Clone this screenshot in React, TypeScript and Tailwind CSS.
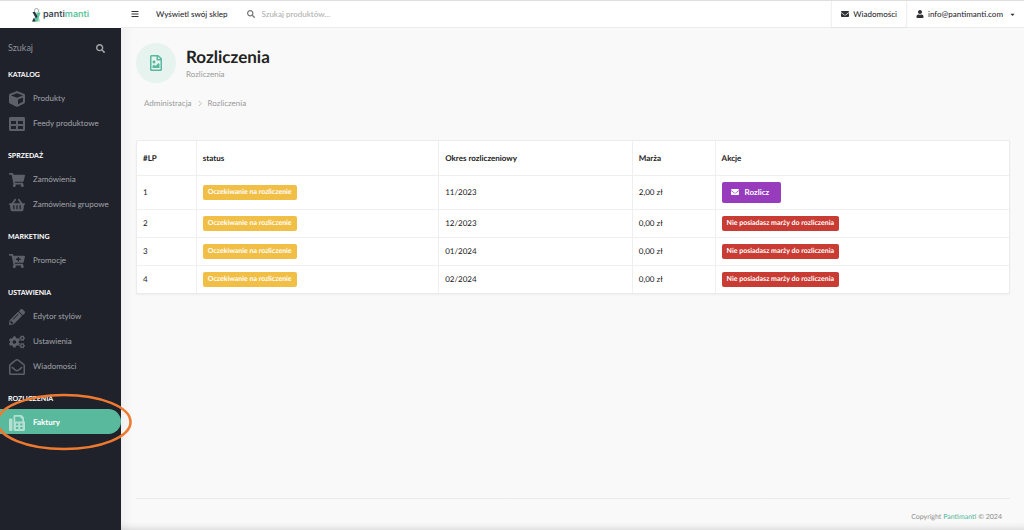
import type { ReactNode } from 'react'
import type { IconType } from 'react-icons'
import {
  FaBars,
  FaCaretDown,
  FaCartPlus,
  FaCogs,
  FaCube,
  FaEnvelope,
  FaPencilAlt,
  FaRegEnvelopeOpen,
  FaRegFileImage,
  FaSearch,
  FaShoppingBasket,
  FaShoppingCart,
  FaTable,
  FaUser,
} from 'react-icons/fa'

type Icon = IconType | ((props: { className?: string }) => ReactNode)
type MenuItem = { label: string; icon: Icon; active?: boolean }
type MenuSection = { title: string; items: MenuItem[] }

// Faks: słuchawka po lewej, kartka ze ściętym rogiem i klawiatura
function FaxIcon({ className }: { className?: string }) {
  return (
    <svg viewBox="0 0 512 512" fill="currentColor" className={className} aria-hidden="true">
      <rect x="0" y="110" width="112" height="402" rx="40" />
      <path
        fillRule="evenodd"
        d="M144 40a40 40 0 0 1 40-40h216l80 80v110a48 48 0 0 1 32 46v228a48 48 0 0 1-48 48H192a48 48 0 0 1-48-48zM200 56v152h224V112h-40a16 16 0 0 1-16-16V56zM224 272v64h72v-64zM360 272v64h72v-64zM224 384v64h72v-64zM360 384v64h72v-64z"
      />
    </svg>
  )
}

const MENU: MenuSection[] = [
  {
    title: 'KATALOG',
    items: [
      { label: 'Produkty', icon: FaCube },
      { label: 'Feedy produktowe', icon: FaTable },
    ],
  },
  {
    title: 'SPRZEDAŻ',
    items: [
      { label: 'Zamówienia', icon: FaShoppingCart },
      { label: 'Zamówienia grupowe', icon: FaShoppingBasket },
    ],
  },
  { title: 'MARKETING', items: [{ label: 'Promocje', icon: FaCartPlus }] },
  {
    title: 'USTAWIENIA',
    items: [
      { label: 'Edytor stylów', icon: FaPencilAlt },
      { label: 'Ustawienia', icon: FaCogs },
      { label: 'Wiadomości', icon: FaRegEnvelopeOpen },
    ],
  },
  { title: 'ROZLICZENIA', items: [{ label: 'Faktury', icon: FaxIcon, active: true }] },
]

const ROWS = [
  { id: 1, period: '11/2023', margin: '2,00 zł', payable: true },
  { id: 2, period: '12/2023', margin: '0,00 zł', payable: false },
  { id: 3, period: '01/2024', margin: '0,00 zł', payable: false },
  { id: 4, period: '02/2024', margin: '0,00 zł', payable: false },
]

function Logo() {
  return (
    <a href="#" className="flex h-[27px] items-center justify-center gap-0.5 bg-white">
      <svg viewBox="0 0 18 28" className="h-3.5 w-[9px]" aria-hidden="true">
        <path d="M5 8V5a4 4 0 0 1 8 0v3" fill="none" stroke="#8b8f94" strokeWidth="1.6" />
        <path d="M2 9h15l-4 9 4 9H1l5-9z" fill="#a5dfc6" />
        <path d="M11 9h6l-6 18H3z" fill="#5fc4a0" />
        <path d="M1 8h5l5 9-3 4z" fill="#2b3440" />
        <path d="M0 27l4-8 3 8z" fill="#2b3440" />
      </svg>
      <span className="font-[Inter,sans-serif] text-[9px] leading-3 font-semibold text-[#3f4a56]">
        panti<span className="text-[#5fc4a0]">manti</span>
      </span>
    </a>
  )
}

function SidebarLink({ item }: { item: MenuItem }) {
  const Icon = item.icon
  return (
    <a
      href="#"
      className={
        item.active
          ? 'flex h-[25px] items-center rounded-r-full bg-[#59b99d] pl-[9px] text-white'
          : 'flex h-[25px] items-center pl-[9px] text-[#a0a2a7]'
      }
    >
      <span className={item.active ? 'w-6 pt-0.5 text-[#b4e0d3]' : 'w-6 pt-0.5 text-[#5d6068]'}>
        <Icon className="h-4 w-auto" />
      </span>
      <span className={item.active ? 'text-[8px] leading-3 font-bold' : 'text-[8px] leading-3'}>{item.label}</span>
    </a>
  )
}

function Sidebar() {
  return (
    <aside className="relative w-[121px] shrink-0 bg-[#1f222b]">
      <Logo />
      <div className="flex items-center px-2 pt-3 pb-2">
        <input
          type="text"
          aria-label="Szukaj"
          placeholder="Szukaj"
          className="w-0 grow bg-transparent text-[9px] leading-4 outline-none placeholder:text-[#8f9197]"
        />
        <button type="button" aria-label="Szukaj w menu" className="mr-2 text-[#a5a7ab]">
          <FaSearch className="size-[9px]" />
        </button>
      </div>
      <nav>
        {MENU.map((section) => (
          <section key={section.title} className="pb-[10px]">
            <h2 className="flex h-[21px] items-center pl-2 text-[7px] leading-3 font-bold text-white">
              {section.title}
            </h2>
            {section.items.map((item) => (
              <SidebarLink key={item.label} item={item} />
            ))}
          </section>
        ))}
      </nav>

      {/* odręczne zaznaczenie pozycji Faktury */}
      <svg
        viewBox="0 0 136 60"
        className="pointer-events-none absolute top-[391px] left-0 z-10 h-[60px] w-[136px]"
        aria-hidden="true"
      >
        <ellipse cx="64" cy="30" rx="66.5" ry="27" fill="none" stroke="#ee7a30" strokeWidth="2.6" />
      </svg>
    </aside>
  )
}

function TopBar() {
  return (
    <header className="flex h-[27px] items-center border-b border-[#ececec] bg-white text-[8px] font-medium text-[#2f3033]">
      <button type="button" aria-label="Menu" className="ml-[10px]">
        <FaBars className="size-2" />
      </button>
      <a href="#" className="ml-[17px]">
        Wyświetl swój sklep
      </a>
      <div className="ml-[19px] flex grow items-center gap-[7px]">
        <FaSearch className="size-2 text-[#777]" />
        <input
          type="text"
          aria-label="Szukaj produktów"
          placeholder="Szukaj produktów..."
          className="w-0 grow bg-transparent text-[8px] outline-none placeholder:text-[#b0b0b0]"
        />
      </div>
      <a href="#" className="flex h-full items-center gap-1 border-x border-[#f0f0f0] px-[9px] shadow-xs">
        <FaEnvelope className="size-2" />
        Wiadomości
      </a>
      <button type="button" className="flex items-center gap-1 pr-2 pl-[9px]">
        <FaUser className="size-2" />
        info@pantimanti.com
        <FaCaretDown className="ml-0.5 size-[7px]" />
      </button>
    </header>
  )
}

function Label({ tone, children }: { tone: 'yellow' | 'red'; children: ReactNode }) {
  return (
    <span
      className={
        tone === 'yellow'
          ? 'inline-block rounded-xs bg-[#f2bf46] px-[5px] py-0.5 text-[7px] leading-[11px] font-bold text-white'
          : 'inline-block rounded-xs bg-[#c93c34] px-[5px] py-0.5 text-[7px] leading-[11px] font-bold text-white'
      }
    >
      {children}
    </span>
  )
}

function SettlementsTable() {
  return (
    <div className="overflow-hidden rounded-xs border border-[#ececec] bg-white shadow-xs">
      <table className="w-full table-fixed text-left text-[8px] text-[#222] [&_td]:border-t [&_td]:border-[#efefef] [&_td]:px-[6px] [&_td+td]:border-l [&_th]:px-[6px] [&_th+th]:border-l [&_th+th]:border-[#efefef]">
        <thead>
          <tr className="h-[34px]">
            <th className="w-[6.8%]">#LP</th>
            <th className="w-[27.8%]">status</th>
            <th className="w-[22.2%]">Okres rozliczeniowy</th>
            <th className="w-[9.5%]">Marża</th>
            <th>Akcje</th>
          </tr>
        </thead>
        <tbody>
          {ROWS.map((row) => (
            <tr key={row.id} className={row.payable ? 'h-[34px]' : 'h-7'}>
              <td>{row.id}</td>
              <td>
                <Label tone="yellow">Oczekiwanie na rozliczenie</Label>
              </td>
              <td>{row.period}</td>
              <td>{row.margin}</td>
              <td>
                {row.payable ? (
                  <button
                    type="button"
                    className="flex h-[21px] items-center gap-[6px] rounded-xs bg-[#963cbd] pr-3 pl-[9px] font-bold text-white"
                  >
                    <FaEnvelope className="size-2" />
                    Rozlicz
                  </button>
                ) : (
                  <Label tone="red">Nie posiadasz marży do rozliczenia</Label>
                )}
              </td>
            </tr>
          ))}
        </tbody>
      </table>
    </div>
  )
}

export default function App() {
  return (
    <div className="flex min-h-screen border-t border-[#dedede] bg-[#f9f9f9] font-[Lato,sans-serif] [text-rendering:geometricPrecision]">
      <Sidebar />
      <div className="flex min-w-0 grow flex-col">
        <TopBar />
        <div className="flex grow flex-col bg-linear-to-r from-[#f0f0f0] to-[#f9f9f9] to-[12px] pr-[14px] pl-[15px] shadow-[inset_0_-8px_8px_-8px_rgba(0,0,0,0.2)]">
          <div className="flex items-center gap-[10px] pt-[15px]">
            <div className="flex size-10 items-center justify-center rounded-full bg-[#e6f3ef] text-[#59b99d]">
              <FaRegFileImage className="size-4" />
            </div>
            <div>
              <h1 className="text-[17px] leading-[22px] font-bold text-[#222]">Rozliczenia</h1>
              <p className="text-[8px] leading-3 text-[#999]">Rozliczenia</p>
            </div>
          </div>

          <nav className="mt-[14px] mb-[31px] flex items-center gap-[6px] pl-2 text-[8px] leading-3 text-[#999]">
            <a href="#">Administracja</a>
            <svg viewBox="0 0 4 8" className="h-[7px] w-1" aria-hidden="true">
              <path d="M0.5 1l3 3-3 3" fill="none" stroke="#aaa" strokeWidth="0.8" />
            </svg>
            <span>Rozliczenia</span>
          </nav>

          <SettlementsTable />

          <footer className="mt-auto border-t border-[#ebebeb] pt-3 pr-2 pb-[7px] text-right text-[7px] leading-3 text-[#8c8c8c]">
            Copyright{' '}
            <a href="#" className="text-[#4fb698]">
              Pantimanti
            </a>{' '}
            © 2024
          </footer>
        </div>
      </div>
    </div>
  )
}
